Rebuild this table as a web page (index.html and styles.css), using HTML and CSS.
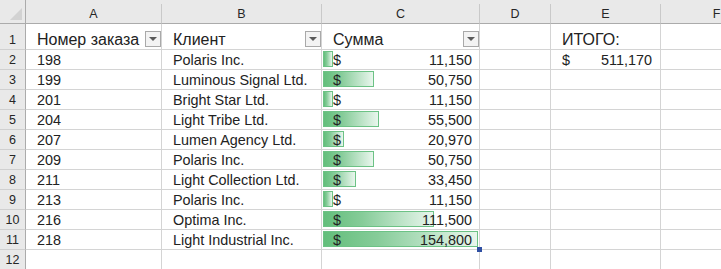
FILE: index.html
```html
<!DOCTYPE html>
<html lang="ru">
<head>
<meta charset="utf-8">
<title>Sheet</title>
<link rel="stylesheet" href="styles.css">
</head>
<body>
<div class="viewport">
<div class="sheet">
  <div class="corner"><svg class="corner-tri" width="14" height="14" viewBox="0 0 14 14"><polygon points="13,1 13,13 1,13" fill="#d2d2d2"/></svg></div>
  <div class="colhdr">A</div>
  <div class="colhdr">B</div>
  <div class="colhdr">C</div>
  <div class="colhdr">D</div>
  <div class="colhdr">E</div>
  <div class="colhdr">F</div>

  <div class="rowhdr">1</div>
  <div class="cell head">Номер заказа<span class="filter"><svg width="8" height="5" viewBox="0 0 8 5"><polygon points="0,0 8,0 4,4" fill="#5a5a5a"/></svg></span></div>
  <div class="cell head">Клиент<span class="filter"><svg width="8" height="5" viewBox="0 0 8 5"><polygon points="0,0 8,0 4,4" fill="#5a5a5a"/></svg></span></div>
  <div class="cell head">Сумма<span class="filter"><svg width="8" height="5" viewBox="0 0 8 5"><polygon points="0,0 8,0 4,4" fill="#5a5a5a"/></svg></span></div>
  <div class="cell"></div>
  <div class="cell big">ИТОГО:</div>
  <div class="cell"></div>

  <div class="rowhdr">2</div>
  <div class="cell">198</div>
  <div class="cell">Polaris Inc.</div>
  <div class="cell money"><span class="bar" style="width:10px"></span><span class="cur">$</span><span class="num">11,150</span></div>
  <div class="cell"></div>
  <div class="cell money total"><span class="cur">$</span><span class="num">511,170</span></div>
  <div class="cell"></div>

  <div class="rowhdr">3</div>
  <div class="cell">199</div>
  <div class="cell">Luminous Signal Ltd.</div>
  <div class="cell money"><span class="bar" style="width:51px"></span><span class="cur">$</span><span class="num">50,750</span></div>
  <div class="cell"></div>
  <div class="cell"></div>
  <div class="cell"></div>

  <div class="rowhdr">4</div>
  <div class="cell">201</div>
  <div class="cell">Bright Star Ltd.</div>
  <div class="cell money"><span class="bar" style="width:10px"></span><span class="cur">$</span><span class="num">11,150</span></div>
  <div class="cell"></div>
  <div class="cell"></div>
  <div class="cell"></div>

  <div class="rowhdr">5</div>
  <div class="cell">204</div>
  <div class="cell">Light Tribe Ltd.</div>
  <div class="cell money"><span class="bar" style="width:56px"></span><span class="cur">$</span><span class="num">55,500</span></div>
  <div class="cell"></div>
  <div class="cell"></div>
  <div class="cell"></div>

  <div class="rowhdr">6</div>
  <div class="cell">207</div>
  <div class="cell">Lumen Agency Ltd.</div>
  <div class="cell money"><span class="bar" style="width:21px"></span><span class="cur">$</span><span class="num">20,970</span></div>
  <div class="cell"></div>
  <div class="cell"></div>
  <div class="cell"></div>

  <div class="rowhdr">7</div>
  <div class="cell">209</div>
  <div class="cell">Polaris Inc.</div>
  <div class="cell money"><span class="bar" style="width:51px"></span><span class="cur">$</span><span class="num">50,750</span></div>
  <div class="cell"></div>
  <div class="cell"></div>
  <div class="cell"></div>

  <div class="rowhdr">8</div>
  <div class="cell">211</div>
  <div class="cell">Light Collection Ltd.</div>
  <div class="cell money"><span class="bar" style="width:33px"></span><span class="cur">$</span><span class="num">33,450</span></div>
  <div class="cell"></div>
  <div class="cell"></div>
  <div class="cell"></div>

  <div class="rowhdr">9</div>
  <div class="cell">213</div>
  <div class="cell">Polaris Inc.</div>
  <div class="cell money"><span class="bar" style="width:10px"></span><span class="cur">$</span><span class="num">11,150</span></div>
  <div class="cell"></div>
  <div class="cell"></div>
  <div class="cell"></div>

  <div class="rowhdr">10</div>
  <div class="cell">216</div>
  <div class="cell">Optima Inc.</div>
  <div class="cell money"><span class="bar" style="width:111px"></span><span class="cur">$</span><span class="num">111,500</span></div>
  <div class="cell"></div>
  <div class="cell"></div>
  <div class="cell"></div>

  <div class="rowhdr">11</div>
  <div class="cell">218</div>
  <div class="cell">Light Industrial Inc.</div>
  <div class="cell money active"><span class="bar" style="width:155px"></span><span class="cur">$</span><span class="num">154,800</span><span class="handle"></span></div>
  <div class="cell"></div>
  <div class="cell"></div>
  <div class="cell"></div>

  <div class="rowhdr">12</div>
  <div class="cell"></div>
  <div class="cell"></div>
  <div class="cell"></div>
  <div class="cell"></div>
  <div class="cell"></div>
  <div class="cell"></div>
</div>
</div>
</body>
</html>
```

FILE: styles.css
```css
html, body {
  margin: 0;
  padding: 0;
  background: #ffffff;
}

.viewport {
  width: 721px;
  height: 269px;
  overflow: hidden;
}

.sheet {
  display: grid;
  grid-template-columns: 26px 136px 160px 158px 71px 110px 112px;
  grid-template-rows: 24px 26px repeat(11, 20px);
  width: 773px;
  background: #e9e9e9;
  font-family: "Liberation Sans", Arial, sans-serif;
  font-size: 14.4px;
  color: #222222;
}

.corner {
  box-sizing: border-box;
  background: #e9e9e9;
  border-right: 1px solid #ababab;
  border-bottom: 1px solid #ababab;
  display: flex;
  align-items: flex-end;
  justify-content: flex-end;
  padding: 0 2px 2px 0;
}

.corner-tri {
  display: block;
}

.colhdr {
  box-sizing: border-box;
  margin-top: 4px;
  background: #e9e9e9;
  border-right: 1px solid #c9c9c9;
  border-bottom: 1px solid #ababab;
  display: flex;
  align-items: center;
  justify-content: center;
  font-size: 12.5px;
  color: #262626;
  padding-top: 1px;
}

.rowhdr {
  box-sizing: border-box;
  background: #e9e9e9;
  border-right: 1px solid #ababab;
  border-bottom: 1px solid #d0d0d0;
  display: flex;
  align-items: flex-end;
  justify-content: center;
  font-size: 12.5px;
  color: #262626;
  padding-bottom: 2px;
}

.cell {
  position: relative;
  box-sizing: border-box;
  background: #ffffff;
  border-right: 1px solid #d4d4d4;
  border-bottom: 1px solid #d4d4d4;
  display: flex;
  align-items: flex-end;
  padding: 0 7px 0 11px;
  white-space: nowrap;
  line-height: 17px;
}

.cell.head,
.cell.big {
  font-size: 16px;
  line-height: 19px;
}

.cell.head {
  padding-right: 0;
}

.filter {
  box-sizing: border-box;
  margin: 0 0 2px auto;
  width: 16px;
  height: 16px;
  background: #f3f3f3;
  border: 1px solid #a9a9a9;
  display: flex;
  align-items: center;
  justify-content: center;
  padding-top: 1px;
  flex: none;
}

.filter svg {
  display: block;
}

.money {
  justify-content: space-between;
}

.money .cur,
.money .num {
  position: relative;
  z-index: 1;
}

.total {
  padding-right: 8px;
}

.bar {
  position: absolute;
  left: 1px;
  top: 1px;
  height: 16px;
  box-sizing: border-box;
  border: 1px solid #6cc285;
  background: linear-gradient(to right, #63be7b 0%, #86cc99 35%, #e9f6ed 100%);
}

.handle {
  position: absolute;
  right: -3px;
  bottom: -3px;
  width: 5px;
  height: 5px;
  background: #2f4fa3;
  z-index: 2;
}
```
